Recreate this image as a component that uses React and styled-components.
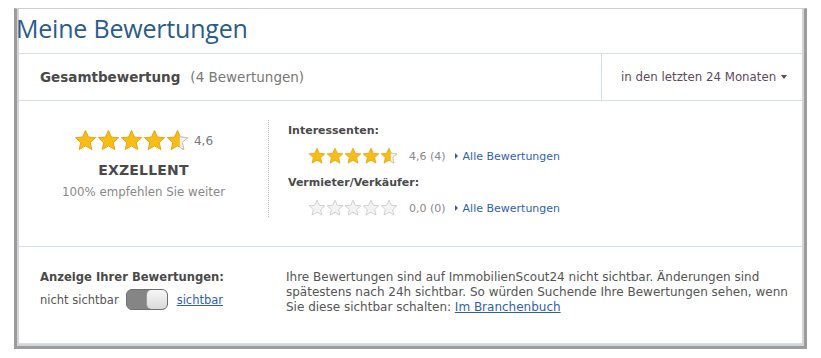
import React from "react";
import styled, { createGlobalStyle } from "styled-components";

const Global = createGlobalStyle`
  html, body { margin: 0; padding: 0; background: #fff; }
  body { font-family: "DejaVu Sans", Verdana, sans-serif; }
`;

const Page = styled.div`
  padding: 8px 14px 9px 14px;
`;

const Frame = styled.div`
  border-left: 3px solid #9c9c9c;
  border-right: 3px solid #9c9c9c;
  border-bottom: 3px solid #9c9c9c;
  border-top: 1px solid #cfcfcf;
  box-shadow: inset 2px 0 0 #d4d4d4, inset -2px 0 0 #d4d4d4, inset 0 -2px 0 #d4d4d4;
  padding: 0 2px 2px 2px;
  height: 341px;
  box-sizing: border-box;
  display: flex;
  flex-direction: column;
`;

const Title = styled.h1`
  margin: 0 0 0 -3px;
  height: 44px;
  padding: 2px 0 0 0;
  box-sizing: border-box;
  font-family: "Open Sans", "Noto Sans", sans-serif;
  font-weight: 400;
  font-size: 25px;
  line-height: 34px;
  color: #2b5c8a;
  letter-spacing: -0.2px;
`;

const Panel = styled.div`
  flex: 1;
  border-top: 1px solid #d3dee6;
  border-bottom: 1px solid #d3dee6;
  display: flex;
  flex-direction: column;
  color: #555;
`;

const HeaderRow = styled.div`
  height: 46px;
  display: flex;
  border-bottom: 1px solid #d3dee6;
`;

const HeaderMain = styled.div`
  flex: 1;
  display: flex;
  align-items: center;
  padding-left: 21px;
  font-size: 13.5px;
`;

const HeaderBold = styled.span`
  font-weight: bold;
  color: #4a4a4a;
`;

const HeaderCount = styled.span`
  color: #777;
  margin-left: 10px;
`;

const HeaderSide = styled.div`
  width: 201px;
  border-left: 1px solid #d3dee6;
  display: flex;
  align-items: center;
  padding-left: 19px;
  box-sizing: border-box;
  font-size: 11.8px;
  color: #5d4a5c;
`;

const Caret = styled.span`
  display: inline-block;
  margin-left: 5px;
  width: 0;
  height: 0;
  border-left: 3px solid transparent;
  border-right: 3px solid transparent;
  border-top: 4px solid #5d4a5c;
`;

const Middle = styled.div`
  height: 146px;
  display: flex;
  align-items: flex-start;
  border-bottom: 1px solid #d3dee6;
  padding-top: 19px;
  box-sizing: border-box;
`;

const Overall = styled.div`
  width: 249px;
  display: flex;
  flex-direction: column;
  align-items: center;
  padding-top: 9px;
`;

const StarLine = styled.div`
  display: flex;
  align-items: center;
  gap: ${p => p.$gap}px;
`;

const BigValue = styled.span`
  font-size: 12px;
  color: #777;
  margin-left: 5px;
`;

const Verdict = styled.div`
  font-weight: bold;
  font-size: 14px;
  color: #4a4a4a;
  margin-top: 10px;
  letter-spacing: 0.2px;
`;

const Recommend = styled.div`
  font-size: 11.8px;
  color: #888;
  margin-top: 7px;
`;

const Divider = styled.div`
  width: 0;
  height: 97px;
  border-left: 1px dotted #bbb;
`;

const Details = styled.div`
  padding-left: 19px;
  display: flex;
  flex-direction: column;
`;

const GroupLabel = styled.div`
  font-weight: bold;
  font-size: 11px;
  color: #4a4a4a;
  margin-top: ${p => p.$top}px;
`;

const RatingRow = styled.div`
  display: flex;
  align-items: center;
  padding-left: 20px;
  margin-top: 10px;
  font-size: 11px;
`;

const SmallValue = styled.span`
  color: #888;
  margin-left: 11px;
`;

const MoreLink = styled.a`
  color: #2f5fb3;
  text-decoration: none;
  margin-left: 9px;
  display: flex;
  align-items: center;
`;

const Tri = styled.span`
  display: inline-block;
  width: 0;
  height: 0;
  border-top: 3px solid transparent;
  border-bottom: 3px solid transparent;
  border-left: 3px solid #2f5fb3;
  margin-right: 5px;
`;

const Bottom = styled.div`
  flex: 1;
  display: flex;
  padding: 23px 0 0 21px;
  box-sizing: border-box;
`;

const Visibility = styled.div`
  width: 246px;
`;

const VisLabel = styled.div`
  font-weight: bold;
  font-size: 11.6px;
  color: #4a4a4a;
`;

const ToggleRow = styled.div`
  display: flex;
  align-items: center;
  margin-top: 5px;
  font-size: 11.5px;
`;

const Toggle = styled.div`
  width: 42px;
  height: 21px;
  margin: 0 9px 0 7px;
  border-radius: 6px;
  background: #858585;
  border: 1px solid #6e6e6e;
  position: relative;
  box-sizing: border-box;
`;

const Knob = styled.div`
  position: absolute;
  right: 0;
  top: 0;
  bottom: 0;
  width: 20px;
  border-radius: 5px;
  background: linear-gradient(#f6f6f6, #dadada);
  border-left: 1px solid #9a9a9a;
`;

const UnderLink = styled.a`
  color: #2f5fb3;
  text-decoration: underline;
`;

const Info = styled.p`
  margin: 0;
  width: 512px;
  font-size: 12px;
  line-height: 15px;
  color: #555;
`;

const STAR = "M12 1.5l3.1 6.9 7.4.7-5.6 5 1.7 7.4L12 17.6l-6.6 3.9 1.7-7.4-5.6-5 7.4-.7z";

function Star({ size, fill, id }) {
  return (
    <svg width={size} height={size} viewBox="0 0 24 24">
      <defs>
        <linearGradient id={id} x1="0" x2="1" y1="0" y2="0">
          <stop offset={fill} stopColor="#f6bd18" />
          <stop offset={fill} stopColor="#f3f3f3" />
        </linearGradient>
        <clipPath id={`${id}c`}>
          <rect x={24 * fill} y="0" width={24} height="24" />
        </clipPath>
      </defs>
      <path
        d={STAR}
        fill={`url(#${id})`}
        stroke={fill > 0 ? "#e4a30c" : "#c4c4c4"}
        strokeWidth="1"
        strokeLinejoin="round"
      />
      {fill > 0 && fill < 1 && (
        <path
          d={STAR}
          fill="#f3f3f3"
          stroke="#c4c4c4"
          strokeWidth="1"
          strokeLinejoin="round"
          clipPath={`url(#${id}c)`}
        />
      )}
    </svg>
  );
}

function Stars({ value, size, gap, prefix }) {
  return (
    <StarLine $gap={gap}>
      {[0, 1, 2, 3, 4].map(i => {
        const f = Math.max(0, Math.min(1, value - i));
        return <Star key={i} size={size} fill={f} id={`${prefix}${i}`} />;
      })}
    </StarLine>
  );
}

export default function App() {
  return (
    <Page>
      <Global />
      <Frame>
        <Title>Meine Bewertungen</Title>
        <Panel>
          <HeaderRow>
            <HeaderMain>
              <HeaderBold>Gesamtbewertung</HeaderBold>
              <HeaderCount>(4 Bewertungen)</HeaderCount>
            </HeaderMain>
            <HeaderSide>
              in den letzten 24 Monaten<Caret />
            </HeaderSide>
          </HeaderRow>
          <Middle>
            <Overall>
              <StarLine $gap={0}>
                <Stars value={4.6} size={23} gap={-1} prefix="b" />
                <BigValue>4,6</BigValue>
              </StarLine>
              <Verdict>EXZELLENT</Verdict>
              <Recommend>100% empfehlen Sie weiter</Recommend>
            </Overall>
            <Divider />
            <Details>
              <GroupLabel $top={4}>Interessenten:</GroupLabel>
              <RatingRow>
                <Stars value={4.6} size={18} gap={0} prefix="i" />
                <SmallValue>4,6 (4)</SmallValue>
                <MoreLink href="#"><Tri />Alle Bewertungen</MoreLink>
              </RatingRow>
              <GroupLabel $top={11}>Vermieter/Verkäufer:</GroupLabel>
              <RatingRow>
                <Stars value={0} size={18} gap={0} prefix="v" />
                <SmallValue>0,0 (0)</SmallValue>
                <MoreLink href="#"><Tri />Alle Bewertungen</MoreLink>
              </RatingRow>
            </Details>
          </Middle>
          <Bottom>
            <Visibility>
              <VisLabel>Anzeige Ihrer Bewertungen:</VisLabel>
              <ToggleRow>
                nicht sichtbar
                <Toggle><Knob /></Toggle>
                <UnderLink href="#">sichtbar</UnderLink>
              </ToggleRow>
            </Visibility>
            <Info>
              Ihre Bewertungen sind auf ImmobilienScout24 nicht sichtbar. Änderungen sind
              spätestens nach 24h sichtbar. So würden Suchende Ihre Bewertungen sehen, wenn
              Sie diese sichtbar schalten: <UnderLink href="#">Im Branchenbuch</UnderLink>
            </Info>
          </Bottom>
        </Panel>
      </Frame>
    </Page>
  );
}
